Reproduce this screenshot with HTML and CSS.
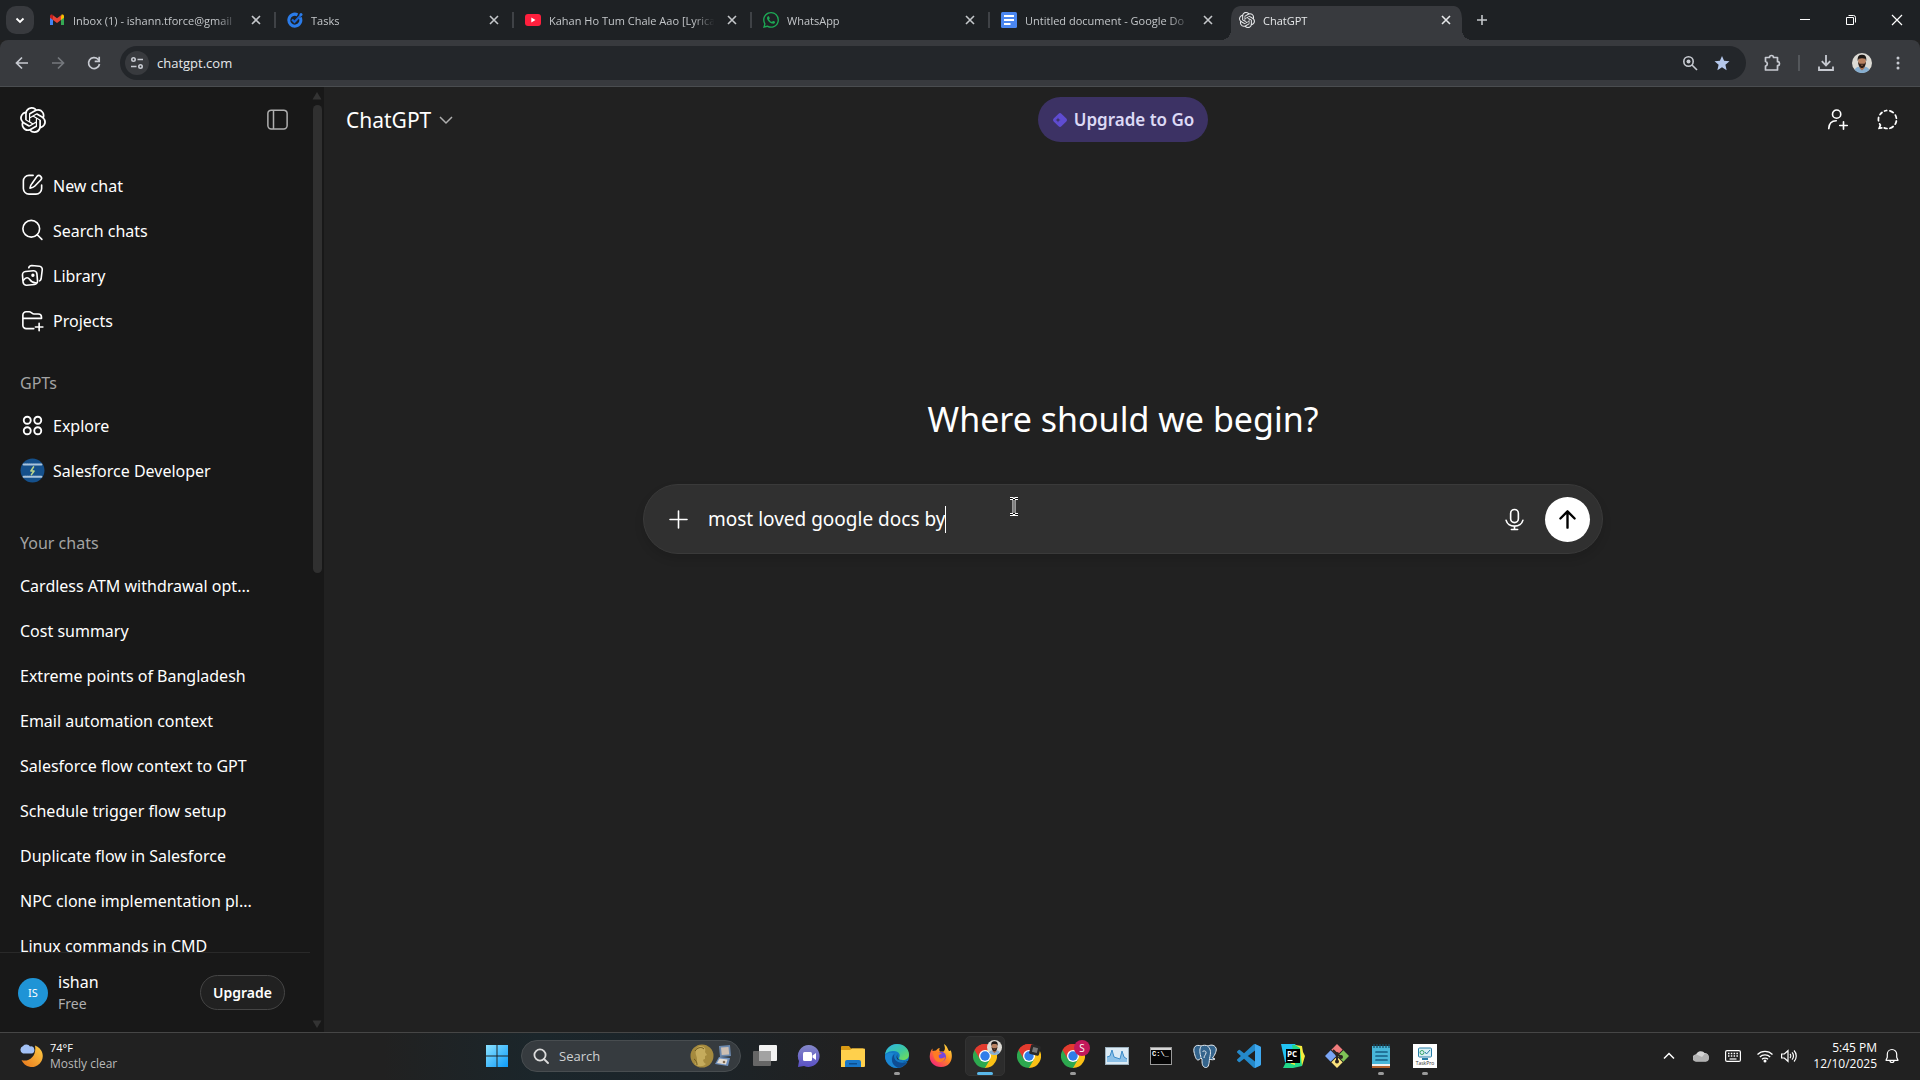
FILE: index.html
```html
<!DOCTYPE html>
<html lang="en">
<head>
  <meta charset="UTF-8">
  <meta name="viewport" content="width=device-width, initial-scale=1">
  <title>ChatGPT</title>
  <link rel="stylesheet" href="styles.css">
</head>
<body>
  <!-- shared icons -->
  <svg class="defs" aria-hidden="true">
    <symbol id="i-openai" viewBox="0 0 24 24"><path fill="currentColor" d="M22.2819 9.8211a5.9847 5.9847 0 0 0-.5157-4.9108 6.0462 6.0462 0 0 0-6.5098-2.9A6.0651 6.0651 0 0 0 4.9807 4.1818a5.9847 5.9847 0 0 0-3.9977 2.9 6.0462 6.0462 0 0 0 .7427 7.0966 5.98 5.98 0 0 0 .511 4.9107 6.051 6.051 0 0 0 6.5146 2.9001A5.9847 5.9847 0 0 0 13.2599 24a6.0557 6.0557 0 0 0 5.7718-4.2058 5.9894 5.9894 0 0 0 3.9977-2.9001 6.0557 6.0557 0 0 0-.7475-7.0729zm-9.022 12.6081a4.4755 4.4755 0 0 1-2.8764-1.0408l.1419-.0804 4.7783-2.7582a.7948.7948 0 0 0 .3927-.6813v-6.7369l2.02 1.1686a.071.071 0 0 1 .038.052v5.5826a4.504 4.504 0 0 1-4.4945 4.4944zm-9.6607-4.1254a4.4708 4.4708 0 0 1-.5346-3.0137l.142.0852 4.783 2.7582a.7712.7712 0 0 0 .7806 0l5.8428-3.3685v2.3324a.0804.0804 0 0 1-.0332.0615L9.74 19.9502a4.4992 4.4992 0 0 1-6.1408-1.6464zM2.3408 7.8956a4.485 4.485 0 0 1 2.3655-1.9728V11.6a.7664.7664 0 0 0 .3879.6765l5.8144 3.3543-2.0201 1.1685a.0757.0757 0 0 1-.071 0l-4.8303-2.7865A4.504 4.504 0 0 1 2.3408 7.872zm16.5963 3.8558L13.1038 8.364 15.1192 7.2a.0757.0757 0 0 1 .071 0l4.8303 2.7913a4.4944 4.4944 0 0 1-.6765 8.1042v-5.6772a.79.79 0 0 0-.407-.667zm2.0107-3.0231l-.142-.0852-4.7735-2.7818a.7759.7759 0 0 0-.7854 0L9.409 9.2297V6.8974a.0662.0662 0 0 1 .0284-.0615l4.8303-2.7866a4.4992 4.4992 0 0 1 6.6802 4.66zM8.3065 12.863l-2.02-1.1638a.0804.0804 0 0 1-.038-.0567V6.0742a4.4992 4.4992 0 0 1 7.3757-3.4537l-.142.0805L8.704 5.459a.7948.7948 0 0 0-.3927.6813zm1.0976-2.3654l2.602-1.4998 2.6069 1.4998v2.9994l-2.5974 1.4997-2.6067-1.4997Z"/></symbol>
    <symbol id="i-close" viewBox="0 0 16 16"><path d="M4 4l8 8M12 4l-8 8" fill="none" stroke="currentColor" stroke-width="1.6"/></symbol>
    <symbol id="i-face" viewBox="0 0 24 24">
      <circle cx="12" cy="12" r="12" fill="#dcdad4"/>
      <path d="M3 20c2-3 5-4 9-4s7 1 9 4a12 12 0 0 1-18 0z" fill="#86aed0"/>
      <path d="M9 14h6v4l-3 3-3-3z" fill="#a9714f"/>
      <ellipse cx="12" cy="10" rx="4.6" ry="6.4" fill="#b98160"/>
      <path d="M7 10C6 3 9 2 12 2s6 1 5 8l-1-3c-2-1-6-1-8 0z" fill="#1d1714"/>
      <path d="M7.400 10.500c0 5 2 7.500 4.600 7.500s4.600-2.500 4.600-7.500l-1.600 2.500h-6zM10 14.200h4l-2 1z" fill="#2b1c16" fill-rule="evenodd"/>
    </symbol>
    <symbol id="i-chrome" viewBox="0 0 24 24">
      <path d="M12 12 1.600 6A12 12 0 0 1 22.400 6z" fill="#e33b2e"/>
      <path d="M12 12V6h10.400A12 12 0 0 1 12 24z" fill="#fbc116"/>
      <path d="M12 12l5.200 3L12 24A12 12 0 0 1 1.600 6z" fill="#2da94f"/>
      <path d="M12 6h10.400A12 12 0 0 0 1.600 6L6.800 15z" fill="#e33b2e"/>
      <circle cx="12" cy="12" r="6" fill="#fff"/>
      <circle cx="12" cy="12" r="4.700" fill="#2f7de9"/>
    </symbol>
  </svg>

  <header class="tabstrip">
    <button class="tab-search" aria-label="Search tabs"><svg width="16" height="16" viewBox="0 0 16 16"><path d="M4.500 6.500L8 10l3.500-3.500" fill="none" stroke="currentColor" stroke-width="1.800"/></svg></button>
    <nav class="tabs" aria-label="Open tabs">
      <div class="tab">
        <svg class="favicon" viewBox="0 0 16 16"><path d="M1 4v9h3V6z" fill="#4285f4"/><path d="M15 4v9h-3V6z" fill="#34a853"/><path d="M12 4.500V8l3-2.300V4c0-1.500-1.700-2-2.600-1.200z" fill="#fbbc04"/><path d="M4 4.500V8L1 5.700V4c0-1.500 1.700-2 2.600-1.200z" fill="#c5221f"/><path d="M4 8V3.200l4 3 4-3V8l-4 3z" fill="#ea4335"/></svg>
        <a href="#">Inbox (1) - ishann.tforce@gmail</a>
        <button aria-label="Close tab"><svg width="16" height="16"><use href="#i-close"/></svg></button>
      </div>
      <div class="tab">
        <svg class="favicon" viewBox="0 0 16 16"><path d="M13.200 5.500A6 6 0 1 1 10.500 2.800" fill="none" stroke="#2b7ce9" stroke-width="3"/><path d="M5 7.500L7.500 10 14 3" fill="none" stroke="#1a66d6" stroke-width="2.200"/><circle cx="14" cy="2.500" r="1.500" fill="#2b7ce9"/></svg>
        <a href="#">Tasks</a>
        <button aria-label="Close tab"><svg width="16" height="16"><use href="#i-close"/></svg></button>
      </div>
      <div class="tab">
        <svg class="favicon" viewBox="0 0 16 16"><rect y="2" width="16" height="12" rx="3" fill="#ff1f3d"/><path d="M6.300 5.500v5l4.200-2.500z" fill="#fff"/></svg>
        <a href="#">Kahan Ho Tum Chale Aao [Lyrica</a>
        <button aria-label="Close tab"><svg width="16" height="16"><use href="#i-close"/></svg></button>
      </div>
      <div class="tab">
        <svg class="favicon" viewBox="0 0 24 24"><path fill="#1da955" d="M17.472 14.382c-.297-.149-1.758-.867-2.03-.967-.273-.099-.471-.148-.67.15-.197.297-.767.966-.94 1.164-.173.199-.347.223-.644.075-.297-.15-1.255-.463-2.39-1.475-.883-.788-1.48-1.761-1.653-2.059-.173-.297-.018-.458.13-.606.134-.133.298-.347.446-.52.149-.174.198-.298.298-.497.099-.198.05-.371-.025-.52-.075-.149-.669-1.612-.916-2.207-.242-.579-.487-.5-.669-.51-.173-.008-.371-.01-.57-.01-.198 0-.52.074-.792.372-.272.297-1.04 1.016-1.04 2.479 0 1.462 1.065 2.875 1.213 3.074.149.198 2.096 3.2 5.077 4.487.709.306 1.262.489 1.694.625.712.227 1.36.195 1.871.118.571-.085 1.758-.719 2.006-1.413.248-.694.248-1.289.173-1.413-.074-.124-.272-.198-.57-.347m-5.421 7.403h-.004a9.87 9.87 0 01-5.031-1.378l-.361-.214-3.741.982.998-3.648-.235-.374a9.86 9.86 0 01-1.51-5.26c.001-5.45 4.436-9.884 9.888-9.884 2.64 0 5.122 1.03 6.988 2.898a9.825 9.825 0 012.893 6.994c-.003 5.45-4.437 9.884-9.885 9.884m8.413-18.297A11.815 11.815 0 0012.05 0C5.495 0 .16 5.335.157 11.892c0 2.096.547 4.142 1.588 5.945L.057 24l6.305-1.654a11.882 11.882 0 005.683 1.448h.005c6.554 0 11.89-5.335 11.893-11.893a11.821 11.821 0 00-3.48-8.413z"/></svg>
        <a href="#">WhatsApp</a>
        <button aria-label="Close tab"><svg width="16" height="16"><use href="#i-close"/></svg></button>
      </div>
      <div class="tab">
        <svg class="favicon" viewBox="0 0 16 16"><rect width="16" height="16" rx="1.500" fill="#4a86f0"/><path d="M3 4h10M3 8h10M3 12h6.500" stroke="#fff" stroke-width="1.800"/></svg>
        <a href="#">Untitled document - Google Do</a>
        <button aria-label="Close tab"><svg width="16" height="16"><use href="#i-close"/></svg></button>
      </div>
      <div class="tab active">
        <svg class="favicon"><use href="#i-openai"/></svg>
        <a href="#">ChatGPT</a>
        <button aria-label="Close tab"><svg width="16" height="16"><use href="#i-close"/></svg></button>
      </div>
    </nav>
    <button class="new-tab" aria-label="New tab"><svg width="16" height="16" viewBox="0 0 16 16"><path d="M8 3v10M3 8h10" stroke="currentColor" stroke-width="1.600"/></svg></button>
    <div class="window-buttons">
      <button aria-label="Minimize"><svg width="12" height="12" viewBox="0 0 12 12"><path d="M1 5.500h10" stroke="currentColor"/></svg></button>
      <button aria-label="Restore"><svg width="12" height="12" viewBox="0 0 12 12"><path d="M1.500 3.500h7v7h-7zM3.500 1.500h5a2 2 0 0 1 2 2v5" fill="none" stroke="currentColor"/></svg></button>
      <button aria-label="Close"><svg width="12" height="12" viewBox="0 0 12 12"><path d="M1 1l10 10M11 1L1 11" stroke="currentColor" stroke-width="1.200"/></svg></button>
    </div>
  </header>

  <div class="toolbar">
    <button aria-label="Back"><svg width="16" height="16" viewBox="0 0 16 16"><path d="M14 8H3M8 2.500L2.500 8 8 13.500" fill="none" stroke="currentColor" stroke-width="1.700"/></svg></button>
    <button class="dim" aria-label="Forward"><svg width="16" height="16" viewBox="0 0 16 16"><path d="M2 8h11M8 2.500L13.500 8 8 13.500" fill="none" stroke="currentColor" stroke-width="1.700"/></svg></button>
    <button aria-label="Reload"><svg width="16" height="16" viewBox="0 0 16 16"><path d="M13.500 9A5.500 5.500 0 1 1 12 4.200l1.500 1.500" fill="none" stroke="currentColor" stroke-width="1.700"/><path d="M13.200 1.800v4.500H8.700" fill="none" stroke="currentColor" stroke-width="1.700"/></svg></button>
    <div class="omnibox">
      <button class="site-info" aria-label="View site information"><svg width="16" height="16" viewBox="0 0 16 16"><g fill="none" stroke="currentColor" stroke-width="1.600"><circle cx="4.500" cy="4.500" r="1.700"/><path d="M8.500 4.500H14M2 11.500h5.500"/><circle cx="11.500" cy="11.500" r="1.700"/></g></svg></button>
      <input type="text" value="chatgpt.com" aria-label="Address and search bar">
      <button aria-label="Zoom"><svg width="16" height="16" viewBox="0 0 16 16"><g fill="none" stroke="currentColor" stroke-width="1.600"><circle cx="6.500" cy="6.500" r="4.700"/><path d="M10 10l5 5"/></g><circle cx="6.500" cy="6.500" r="2" fill="currentColor"/></svg></button>
      <button class="star" aria-label="Edit bookmark"><svg width="18" height="18" viewBox="0 0 24 24"><path fill="currentColor" d="M12 17.770 18.180 21.500l-1.640-7.030L22 9.740l-7.190-.610L12 2.500 9.190 9.130 2 9.740l5.460 4.730L5.820 21.500z"/></svg></button>
    </div>
    <button class="ext" aria-label="Extensions"><svg width="18" height="18" viewBox="0 0 18 18"><path d="M2.500 3.500h4a2 2 0 0 1 4 0h4v4.200a2 2 0 0 1 0 4V16h-12v-4a2.300 2.300 0 0 0 0-4.500z" fill="none" stroke="currentColor" stroke-width="1.700" stroke-linejoin="round"/></svg></button>
    <span class="divider"></span>
    <button aria-label="Downloads"><svg width="18" height="18" viewBox="0 0 18 18"><path d="M9 1v10M4.800 7.200L9 11.400l4.200-4.200M2 12.500V16h14v-3.500" fill="none" stroke="currentColor" stroke-width="1.800"/></svg></button>
    <button aria-label="Profile"><svg width="20" height="20"><use href="#i-face"/></svg></button>
    <button aria-label="Menu"><svg width="16" height="16" viewBox="0 0 16 16" fill="currentColor"><circle cx="8" cy="3" r="1.500"/><circle cx="8" cy="8" r="1.500"/><circle cx="8" cy="13" r="1.500"/></svg></button>
  </div>

  <div class="page">
    <aside class="sidebar">
      <div class="side-body">
        <div class="side-scroll">
          <div class="side-top">
            <a href="#" aria-label="Home"><svg width="26" height="26"><use href="#i-openai"/></svg></a>
            <button aria-label="Close sidebar"><svg width="25" height="25" viewBox="0 0 20 20"><path d="M6.800 2.500v15M5 2.500h10A2.700 2.700 0 0 1 17.700 5.200v9.600A2.700 2.700 0 0 1 15 17.500H5a2.700 2.700 0 0 1-2.700-2.700V5.200A2.700 2.700 0 0 1 5 2.500z" fill="none" stroke="currentColor" stroke-width="1.200"/></svg></button>
          </div>
          <nav class="group">
            <a href="#"><svg class="ico" viewBox="0 0 20 20"><path d="M10.500 1.900H7.200A4.500 4.500 0 0 0 2.700 6.400v6a4.500 4.500 0 0 0 4.500 4.500h5.600a4.500 4.500 0 0 0 4.500-4.500V9.600M13.600 2.700a2 2 0 0 1 3 2.900l-4.900 5c-.8.800-2.200 1.300-3.700 1.500.2-1.500.8-2.900 1.600-3.700z"/></svg>New chat</a>
            <a href="#"><svg class="ico" viewBox="0 0 20 20"><circle cx="9" cy="8.600" r="6.700"/><path d="M13.800 13.400l3.700 3.700"/></svg>Search chats</a>
            <a href="#"><svg class="ico" viewBox="0 0 20 20"><rect x="2.200" y="6.500" width="11.600" height="11" rx="2.700" transform="rotate(-5 8 12)"/><path d="M7 3.800A2.500 2.500 0 0 1 9.400 2l6.200.600a2.500 2.500 0 0 1 2.200 2.800l-.9 7.200a2.500 2.500 0 0 1-1.200 1.700M2.800 13.800c2-2.600 3.600-2.500 5-.600 1.200 1.600 2.900 3 5.200 2.700"/><circle cx="10.300" cy="9.800" r=".7" fill="currentColor"/></svg>Library</a>
            <a href="#"><svg class="ico" viewBox="0 0 20 20"><path d="M2.300 8.300h14.900V7.400A2.600 2.600 0 0 0 14.600 4.800h-3.400C9.600 4.800 9 3 7.300 3H4.900a2.600 2.600 0 0 0-2.600 2.600v8.300a2.600 2.600 0 0 0 2.600 2.600H11M15.300 12.200v6M12.300 15.200h6"/></svg>Projects</a>
          </nav>
          <nav class="group">
            <h2>GPTs</h2>
            <a href="#"><svg class="ico thick" viewBox="0 0 20 20"><circle cx="5.800" cy="5.800" r="2.800"/><circle cx="14.200" cy="5.800" r="2.800"/><circle cx="5.800" cy="14.200" r="2.800"/><circle cx="14.200" cy="14.200" r="2.800"/></svg>Explore</a>
            <a href="#"><svg class="ico plain" viewBox="0 0 24 24"><circle cx="12" cy="12" r="11.500" fill="#15508b"/><path d="M3.500 6.300h17M3.500 18h17" stroke="#a9c3dc" stroke-width="2" stroke-dasharray="1.500 .5"/><path d="M13 8.500l-2.500 4h3L11 16" fill="none" stroke="#bcd58a" stroke-width="1.500"/></svg>Salesforce Developer</a>
          </nav>
          <nav class="group chats">
            <h2>Your chats</h2>
            <a href="#">Cardless ATM withdrawal opt...</a>
            <a href="#">Cost summary</a>
            <a href="#">Extreme points of Bangladesh</a>
            <a href="#">Email automation context</a>
            <a href="#">Salesforce flow context to GPT</a>
            <a href="#">Schedule trigger flow setup</a>
            <a href="#">Duplicate flow in Salesforce</a>
            <a href="#">NPC clone implementation pl...</a>
            <a href="#">Linux commands in CMD</a>
          </nav>
        </div>
        <div class="account">
          <span class="avatar">IS</span>
          <div class="who"><span>ishan</span><small>Free</small></div>
          <button>Upgrade</button>
        </div>
      </div>
      <div class="rail" aria-hidden="true">
        <svg width="10" height="8" viewBox="0 0 10 8"><path d="M5 0l4.500 7.500h-9z" fill="#333"/></svg>
        <div class="track"><div class="thumb"></div></div>
        <svg width="10" height="8" viewBox="0 0 10 8"><path d="M5 8L.5.500h9z" fill="#333"/></svg>
      </div>
    </aside>

    <main>
      <div class="main-top">
        <button class="model">ChatGPT<svg width="18" height="18" viewBox="0 0 18 18"><path d="M3 6l6 6 6-6" fill="none" stroke="#afafaf" stroke-width="1.500"/></svg></button>
        <button class="go"><svg width="16" height="16" viewBox="0 0 16 16"><rect x="2.500" y="2.500" width="11" height="11" rx="2" transform="rotate(45 8 8)" fill="#5f4cd0"/><path d="M6 5.500l.7 1.800 1.800.7-1.800.7L6 10.500l-.7-1.800L3.500 8l1.800-.7z" fill="#3c3264"/></svg>Upgrade to Go</button>
        <div class="main-actions">
          <button aria-label="Start a group chat"><svg width="25" height="25" viewBox="0 0 20 20"><g fill="none" stroke="currentColor" stroke-width="1.300" stroke-linecap="round"><circle cx="9.300" cy="5.700" r="3.300"/><path d="M3 17.300c.2-4.200 2.500-6.300 6-6.300M14.800 11.800v6M11.800 14.800h6"/></g></svg></button>
          <button aria-label="Temporary chat"><svg width="25" height="25" viewBox="0 0 20 20"><g fill="none" stroke="currentColor" stroke-width="1.400" stroke-linecap="round"><path d="M11.900 3.050a7.200 7.200 0 0 1 2.700 1.400M16.300 6.500a7.200 7.200 0 0 1 .8 2.500M17.100 11.200a7.200 7.200 0 0 1-.9 2.500M14.500 15.600a7.200 7.200 0 0 1-2.600 1.400M9.600 17.200a7.200 7.200 0 0 1-2.200-.5M3.700 13.500l.6 1-.9 2.500 2-.3M2.800 11a7.200 7.200 0 0 1 .1-2.600M4 6.100a7.200 7.200 0 0 1 1.600-1.700M7.600 3.200a7.200 7.200 0 0 1 1.700-.4"/></g></svg></button>
        </div>
      </div>
      <div class="start">
        <h1>Where should we begin?</h1>
        <form class="composer">
          <button type="button" aria-label="Add files"><svg width="25" height="25" viewBox="0 0 25 25"><path d="M12.500 4v17M4 12.500h17" stroke="currentColor" stroke-width="1.600" stroke-linecap="round"/></svg></button>
          <div class="prompt"><input type="text" value="most loved google docs by" size="25" aria-label="Ask anything"><span class="caret"></span></div>
          <button type="button" aria-label="Dictate"><svg width="25" height="25" viewBox="0 0 20 20"><g fill="none" stroke="currentColor" stroke-width="1.300" stroke-linecap="round"><rect x="6.900" y="2" width="6.200" height="10.500" rx="3.100"/><path d="M3.300 10.700c.8 2.800 3.500 4.600 6.700 4.600s5.900-1.800 6.700-4.600M10 15.300v2.600M7.500 18h5"/></g></svg></button>
          <button type="button" class="send" aria-label="Send prompt"><svg width="25" height="25" viewBox="0 0 20 20"><path d="M10 16.500v-13M4.300 9.200L10 3.500l5.700 5.700" fill="none" stroke="currentColor" stroke-width="1.900" stroke-linecap="round" stroke-linejoin="round"/></svg></button>
          <svg class="ibeam" width="10" height="19" viewBox="0 0 10 19" aria-hidden="true"><path d="M1 1.500h2.500L5 3l1.500-1.500H9M5 3v13M1 17.500h2.500L5 16l1.500 1.500H9" fill="none" stroke="#fff" stroke-width="3"/><path d="M1 1.500h2.500L5 3l1.500-1.500H9M5 3v13M1 17.500h2.500L5 16l1.500 1.500H9" fill="none" stroke="#000"/></svg>
        </form>
      </div>
    </main>
  </div>

  <footer class="taskbar">
    <div class="weather">
      <svg width="26" height="26" viewBox="0 0 26 26"><defs><linearGradient id="moon" x1="1" y1="0" x2="0" y2="1"><stop offset="0" stop-color="#ffce45"/><stop offset="1" stop-color="#e8761c"/></linearGradient></defs><path d="M17 2.500A11 11 0 1 1 3.500 17C11 19.500 19 13 17 2.500z" fill="url(#moon)"/><path d="M5 10.500a4 4 0 0 1 0-7.500A4.500 4.500 0 0 1 12 3.500a3.500 3.500 0 0 1 1.500 7z" fill="#a3c1f5"/></svg>
      <div><span>74°F</span><small>Mostly clear</small></div>
    </div>
    <div class="apps">
      <button aria-label="Start"><svg width="24" height="24" viewBox="0 0 24 24"><defs><linearGradient id="win" x1="0" y1="0" x2="1" y2="1"><stop offset="0" stop-color="#8be2ff"/><stop offset="1" stop-color="#0c9bfa"/></linearGradient></defs><path d="M1 1h10.500v10.500H1zM12.500 1H23v10.500H12.500zM1 12.500h10.500V23H1zM12.500 12.500H23V23H12.500z" fill="url(#win)"/></svg></button>
      <label class="search">
        <svg width="16" height="16" viewBox="0 0 16 16"><g fill="none" stroke="#dcdcdc" stroke-width="1.800" stroke-linecap="round"><circle cx="7" cy="7" r="5.600"/><path d="M11 11l4 4"/></g></svg>
        <input type="text" placeholder="Search" aria-label="Search">
        <svg width="44" height="24" viewBox="0 0 44 24"><circle cx="12" cy="12" r="11.500" fill="#a58a3e"/><path d="M10 2c5 0 6 3 5 6l2 3-2 1v3c-3 0-2 3 1 5-3 3-8 3-11 0 3-4 2-6 1-9s0-8 4-9z" fill="#c5ab5c"/><path d="M5 7c2-3 6-5 9-2M4 15c2 1 3 3 3 6" stroke="#6f5a20" fill="none"/><path d="M29 2l11-1 1 11-11 1z" fill="#6a87ac"/><path d="M31 3.500l7.500-.5.700 7.500-7.500.500z" fill="#cdbfb2"/><path d="M29 13l11 1-2 8-13-2z" fill="#6f90bd"/><path d="M29.500 14.500l8 1-1.500 5-9-1.500z" fill="#e4dcd2"/><circle cx="34" cy="18" r="1.300" fill="#806a52"/></svg>
      </label>
      <button aria-label="Task view"><svg width="24" height="24" viewBox="0 0 24 24"><rect x="6" y="1" width="18" height="16" rx="1" fill="#f2f2f2"/><rect y="7" width="18" height="15" rx="1" fill="#666"/><rect x="6" y="7" width="12" height="10" fill="#a2a2a2"/></svg></button>
      <button aria-label="Chat"><svg width="24" height="24" viewBox="0 0 24 24"><defs><linearGradient id="chat" x1="0" y1="0" x2="0" y2="1"><stop offset="0" stop-color="#8488c9"/><stop offset="1" stop-color="#5a50c4"/></linearGradient></defs><path d="M12 1a11 11 0 1 1-5 21l-6 1 1-6A11 11 0 0 1 12 1z" fill="url(#chat)"/><rect x="6" y="8" width="9" height="9" rx="1.500" fill="#fff"/><path d="M15.500 11.500L19 9v7l-3.500-2.500z" fill="#fff"/></svg></button>
      <button aria-label="File Explorer"><svg width="24" height="24" viewBox="0 0 24 24"><path d="M0 3a1 1 0 0 1 1-1h7l2 2.500H22V8H0z" fill="#d99a14"/><path d="M0 6h9l2-1.500h12a1 1 0 0 1 1 1V22a1 1 0 0 1-1 1H0z" fill="#ffd04c"/><path d="M4 23v-5a2 2 0 0 1 2-2h12a2 2 0 0 1 2 2v5z" fill="#1877c9"/><path d="M8 19h8v1.500H8z" fill="#0d4f8f"/></svg></button>
      <button class="running" aria-label="Microsoft Edge"><svg width="24" height="24" viewBox="0 0 24 24"><defs><linearGradient id="edge" x1="0" y1="0" x2="1" y2="1"><stop offset="0" stop-color="#2fb6e6"/><stop offset=".55" stop-color="#3dc8a0"/><stop offset="1" stop-color="#7be04b"/></linearGradient></defs><circle cx="12" cy="12" r="12" fill="#1279c6"/><path d="M0 11C1 4 6 0 12 0c7 0 12 5 12 10.500 0 4-3 5.500-6 5.500-2.500 0-4.500-1-4-2 2-3 0-7-5-7-4 0-8 1.500-9 4z" fill="url(#edge)"/><path d="M9 9.500c-4 3-3 11 4 14C6 25 0 18.500 0 12c2-3.500 6-4 9-2.500z" fill="#1b86d2"/><path d="M9.500 10c-2 5 3 11 12.500 8-2 3.500-5 5.500-9 5.700C6 21.500 5.500 13 9.500 10z" fill="#0e4c92"/><path d="M12.500 10c-1.500 5 2 8 10 7l1.500 1.500L20 17c-7 0-10-2-7.500-7z" fill="#20242a"/></svg></button>
      <button aria-label="Firefox"><svg width="24" height="24" viewBox="0 0 24 24"><defs><linearGradient id="fox" x1="1" y1="0" x2=".2" y2="1"><stop offset="0" stop-color="#fff04a"/><stop offset=".5" stop-color="#ff8a1f"/><stop offset="1" stop-color="#f5217b"/></linearGradient></defs><path d="M15 0c4 3 3.500 5 5 7 1.500.5 1.500-1 1.500-1 3 6 1.500 17-9.500 17C5 23 0 18 .8 11.500 1 8 2.500 5.500 3.500 4.500V7L7 6.500C9 4 11 4 11 4c-1 1-1 2.500 0 3.500h3.500C17 5 15.500 2 15 0z" fill="url(#fox)"/><circle cx="12" cy="12.800" r="5" fill="#7545dd"/><path d="M4 8c3-1 7 0 9 2-3 0-4 1.500-3 3.500 1 1.500 4 1 6-.5 0 4-3 5.500-6 5-4-.5-6-5-6-10z" fill="#ff7b24"/></svg></button>
      <button class="running current" aria-label="Google Chrome"><svg width="30" height="28" viewBox="0 0 30 28"><svg y="4" width="24" height="24"><use href="#i-chrome"/></svg><svg x="14" width="15" height="15"><use href="#i-face"/></svg></svg></button>
      <button aria-label="Google Chrome"><svg width="24" height="24" viewBox="0 0 24 24"><use href="#i-chrome"/><rect x="13" y="1" width="10" height="10" rx="1.500" transform="rotate(15 18 6)" fill="#292929"/><rect x="15.500" y="3.500" width="5" height="5" transform="rotate(15 18 6)" fill="#777"/></svg></button>
      <button class="running" aria-label="Google Chrome"><svg width="30" height="28" viewBox="0 0 30 28"><svg y="4" width="24" height="24"><use href="#i-chrome"/></svg><circle cx="21" cy="8" r="8" fill="#c2185b"/><text x="21" y="12" text-anchor="middle" class="badge-text">S</text></svg></button>
      <button aria-label="Performance Monitor"><svg width="24" height="24" viewBox="0 0 24 24"><rect x=".5" y="3.500" width="23" height="17" fill="#dcebf5" stroke="#9bb0bd"/><path d="M2 18v-5l3-1 2-6 2 7 3 1 3 1 2-8 2 6 3 2v3z" fill="#8cc1e8"/><path d="M2 13l3-1 2-6 2 7 3 1 3 1 2-8 2 6 3 2" fill="none" stroke="#3c8cc9"/></svg></button>
      <button aria-label="Command Prompt"><svg width="24" height="24" viewBox="0 0 24 24"><rect x="1.500" y="3.500" width="21" height="17" fill="#050505" stroke="#9a9a9a"/><path d="M2 4h20v2H2z" fill="#d6d6d6"/><text x="3" y="12" class="cmd-text">C:\_</text></svg></button>
      <button aria-label="PostgreSQL"><svg width="24" height="24" viewBox="0 0 24 24"><path d="M8 2C3 0 0 3 1 8c1 4 2 8 4 8s2-2 3-2l1 1c0 4 0 8 3.500 8.500C16 24 16 19 16.500 15c2 1 4 1 5.500 0l-2.500-1C22 11 24 6 23 4c-2-4-6-3-8-2-2-1-5-1-7 0z" fill="#34648c" stroke="#e7edf2"/><path d="M8 2.500c-2 3-1 7 0 11M15 2.500c3 3 3 6 1.500 12M9.500 8c1-2 4-1 3.500 1s-2 3-2 5" fill="none" stroke="#e7edf2"/></svg></button>
      <button aria-label="Visual Studio Code"><svg width="24" height="24" viewBox="0 0 24 24"><path fill="#2489ca" d="M23.150 2.587L18.210.210a1.494 1.494 0 0 0-1.705.290l-9.460 8.630-4.120-3.128a.999.999 0 0 0-1.276.057L.327 7.261A1 1 0 0 0 .326 8.740L3.899 12 .326 15.260a1 1 0 0 0 .001 1.479L1.650 17.940a.999.999 0 0 0 1.276.057l4.120-3.128 9.460 8.630a1.492 1.492 0 0 0 1.704.290l4.942-2.377A1.500 1.500 0 0 0 24 20.060V3.939a1.500 1.500 0 0 0-.850-1.352zm-5.146 14.861L10.826 12l7.178-5.448v10.896z"/><path fill="#3fa9f0" d="M18.004 0v24l5.200-2.600c.5-.3.796-.8.796-1.400V4c0-.6-.3-1.100-.8-1.400z"/></svg></button>
      <button aria-label="PyCharm"><svg width="24" height="24" viewBox="0 0 24 24"><path d="M0 0h14l4 5-4 16-10-3z" fill="#22c3f3"/><path d="M14 1l7 1 1 6 2 4-3 10H9z" fill="#f7ed3d"/><path d="M14 1h-3l3 20-9-3-3 6h10l9-2-2-18z" fill="#21d789"/><rect x="5" y="5" width="14" height="14" fill="#000"/><text x="6" y="12.500" class="pc-text">PC</text><path d="M6.500 16.500h5" stroke="#fff"/></svg></button>
      <button aria-label="Git"><svg width="24" height="24" viewBox="0 0 24 24"><g transform="rotate(45 12 12)"><rect x="3.500" y="3.500" width="8" height="8" fill="#f07c7c"/><rect x="12.500" y="3.500" width="8" height="8" fill="#7fc356"/><rect x="3.500" y="12.500" width="8" height="8" fill="#7aa5f5"/><rect x="12.500" y="12.500" width="8" height="8" fill="#fbe27d"/></g><path d="M8 6l4 4v8M12 10l4 3" fill="none" stroke="#2b2321" stroke-width="2"/><circle cx="12" cy="10" r="2" fill="#2b2321"/><circle cx="12" cy="17.500" r="2" fill="#2b2321"/><circle cx="16" cy="13" r="2" fill="#2b2321"/></svg></button>
      <button class="running" aria-label="Notepad"><svg width="24" height="24" viewBox="0 0 24 24"><path d="M3 2h18v19H3z" fill="#48b6d8"/><path d="M3 20h18v2H3z" fill="#f1f1f1"/><path d="M3 22h18v2H3z" fill="#b4622c"/><path d="M5 0v4M8 0v4M11 0v4M14 0v4M17 0v4M20 0v4" stroke="#174e68" stroke-width="1.200"/><path d="M7 8h11M7 12h11M7 16h11" stroke="#145d83" stroke-width="1.700" stroke-linecap="round"/></svg></button>
      <button class="running" aria-label="TaskPro"><svg width="24" height="24" viewBox="0 0 24 24"><rect width="24" height="24" fill="#fff"/><rect x="5.500" y="4" width="13" height="9" rx="1" fill="#d9f0f5" stroke="#287fa8"/><circle cx="9" cy="8.500" r="2" fill="none" stroke="#35a567"/><path d="M12 8l1.500 2L17 6" stroke="#287fa8" fill="none"/><path d="M9 15h6" stroke="#287fa8" stroke-width="2"/><text x="12" y="20.500" text-anchor="middle" class="task-text">TaskPro</text></svg></button>
    </div>
    <div class="tray">
      <button aria-label="Show hidden icons"><svg width="16" height="16" viewBox="0 0 16 16"><path d="M3 10.500l5-5 5 5" fill="none" stroke="currentColor" stroke-width="1.500"/></svg></button>
      <button aria-label="OneDrive"><svg width="16" height="16" viewBox="0 0 16 16"><path d="M3.500 13.500a3.500 3.500 0 0 1-.5-7 5 5 0 0 1 8.500-1.500A4.400 4.400 0 0 1 13 13.500z" fill="#d5d5d5"/><path d="M3.500 13.500a3.500 3.500 0 0 1 0-7L9 9l3-3.500c2 0 4 2 4 4 0 2.500-1 4-3 4z" fill="#b2b2b2"/></svg></button>
      <button aria-label="Touch keyboard"><svg width="16" height="16" viewBox="0 0 16 16"><rect x=".6" y="2.600" width="14.800" height="10.800" rx="1.500" fill="none" stroke="currentColor" stroke-width="1.200"/><path d="M3 5.500h10M3 8h10" stroke="currentColor" stroke-width="1.500" stroke-dasharray="1.500 1.300"/><path d="M4.500 11h7" stroke="currentColor" stroke-width="1.200"/></svg></button>
      <button class="net" aria-label="Network and volume">
        <svg width="16" height="16" viewBox="0 0 16 16"><g fill="none" stroke="currentColor" stroke-width="1.300"><path d="M.5 6.500a10.500 10.500 0 0 1 15 0M2.800 9a7.300 7.300 0 0 1 10.400 0M5 11.300a4.200 4.200 0 0 1 6 0"/></g><circle cx="8" cy="13" r="1.500" fill="currentColor"/></svg>
        <svg width="16" height="16" viewBox="0 0 16 16"><g fill="none" stroke="currentColor" stroke-width="1.200"><path d="M.6 6h2.700L7 2.700v10.600L3.300 10H.6z"/><path d="M9 6c1 1 1 3 0 4M11 4.300c2 2 2 5.400 0 7.400M13 2.500c3 3 3 8 0 11"/></g></svg>
      </button>
      <div class="clock"><span>5:45 PM</span><span>12/10/2025</span></div>
      <button aria-label="Notifications"><svg width="16" height="16" viewBox="0 0 16 16"><path d="M8 1.500a4.700 4.700 0 0 0-4.700 4.700v3L2 12.300h12l-1.300-3.100v-3A4.700 4.700 0 0 0 8 1.500zM6 12.500a2 2 0 0 0 4 0" fill="none" stroke="currentColor" stroke-width="1.200" stroke-linejoin="round"/></svg></button>
    </div>
  </footer>
</body>
</html>
```
FILE: styles.css
```css
* {
  box-sizing: border-box;
}

body {
  margin: 0;
  height: 100vh;
  display: flex;
  flex-direction: column;
  overflow: hidden;
  background: #212121;
  color: #fff;
  font-family: "Open Sans", "Noto Sans", sans-serif;
  font-size: 16px;
}

button, input {
  font: inherit;
  color: inherit;
  background: none;
  border: none;
  padding: 0;
  outline: none;
}

button {
  display: flex;
  align-items: center;
  justify-content: center;
  flex-shrink: 0;
  cursor: pointer;
}

a {
  color: inherit;
  text-decoration: none;
}

svg {
  display: block;
  flex-shrink: 0;
}

.defs {
  position: absolute;
  width: 0;
  height: 0;
}

/* browser tabs */
.tabstrip {
  display: flex;
  height: 40px;
  flex-shrink: 0;
  padding-left: 6px;
  background: #1e2124;
  color: #c4c7ca;
  font-size: 11px;
}

.tab-search {
  width: 28px;
  height: 28px;
  margin: 6px 4px 0 0;
  border-radius: 10px;
  background: #383a3e;
  color: #fff;
}

.tabs {
  display: flex;
  flex: 0 1 1428px;
  min-width: 0;
  padding-top: 6px;
}

.tab {
  position: relative;
  display: flex;
  align-items: center;
  flex: 1 1 0;
  min-width: 0;
  height: 34px;
  padding: 0 12px 6px 11px;
}

.tab a {
  flex: 1;
  margin: 0 6px 0 8px;
  overflow: hidden;
  white-space: nowrap;
  mask-image: linear-gradient(to right, #000 85%, transparent 98%);
}

.tab::after {
  content: "";
  position: absolute;
  right: 0;
  top: 6px;
  width: 2px;
  height: 16px;
  background: #3f4246;
}

.tab:nth-child(5)::after {
  display: none;
}

.tab.active {
  border: solid transparent;
  border-width: 0 4px 0 3px;
  padding: 0 8px 6px 8px;
  background: #383a3e;
  background-clip: padding-box;
  border-radius: 12px 12px 0 0;
  color: #e6e8ea;
}

/* curved feet of the open tab */
.tab.active::before,
.tab.active::after {
  content: "";
  position: absolute;
  top: auto;
  bottom: 0;
  width: 10px;
  height: 10px;
}

.tab.active::before {
  left: -10px;
  background: radial-gradient(circle at 0 0, transparent 10px, #383a3e 10px);
}

.tab.active::after {
  right: -10px;
  background: radial-gradient(circle at 100% 0, transparent 10px, #383a3e 10px);
}

.favicon {
  width: 16px;
  height: 16px;
}

.new-tab {
  width: 28px;
  height: 28px;
  margin: 6px 0 0 2px;
}

.window-buttons {
  display: flex;
  margin-left: auto;
  color: #fff;
}

.window-buttons button {
  width: 46px;
}

/* address row */
.toolbar {
  display: flex;
  align-items: center;
  height: 47px;
  flex-shrink: 0;
  padding-left: 4px;
  padding-right: 4px;
  background: #383a3e;
  border-bottom: 1px solid #4a4d50;
  border-radius: 8px 8px 0 0;
  color: #c7cad1;
}

.toolbar > button {
  width: 36px;
  height: 34px;
}

.toolbar .dim {
  color: #75787d;
}

.omnibox {
  display: flex;
  align-items: center;
  flex: 1;
  height: 34px;
  margin: 0 8px;
  padding: 0 8px 0 5px;
  border-radius: 17px;
  background: #23262a;
}

.omnibox button {
  width: 32px;
}

.omnibox .site-info {
  width: 24px;
  height: 24px;
  border-radius: 50%;
  background: #383a3e;
}

.omnibox input {
  flex: 1;
  margin-left: 8px;
  font-size: 13px;
  color: #e6e8ea;
}

.omnibox .star {
  color: #b5c8ec;
}

.divider {
  width: 2px;
  height: 16px;
  margin: 0 8px;
  background: #54575b;
}

/* page */
.page {
  display: flex;
  flex: 1;
  min-height: 0;
  font-family: "Noto Sans", "Open Sans", sans-serif;
}

.sidebar {
  display: flex;
  width: 324px;
  flex-shrink: 0;
  background: #181818;
}

.side-body {
  display: flex;
  flex-direction: column;
  flex: 1;
  min-width: 0;
}

.side-scroll {
  flex: 1;
  min-height: 0;
  overflow: hidden;
}

.side-top {
  display: flex;
  align-items: center;
  justify-content: space-between;
  height: 65px;
  padding: 0 20px;
  margin-bottom: 11px;
}

.side-top button {
  color: #afafaf;
}

.group {
  padding: 0 20px;
  margin-bottom: 20px;
}

.group + .group {
  margin-bottom: 30px;
}

.group h2 {
  margin: 0;
  font-size: 16px;
  font-weight: 400;
  line-height: 40px;
  color: #a3a3a3;
}

.group a {
  display: flex;
  align-items: center;
  gap: 8px;
  height: 45px;
  white-space: nowrap;
}

.ico {
  width: 25px;
  height: 25px;
  fill: none;
  stroke: currentColor;
  stroke-width: 1.3;
  stroke-linecap: round;
  stroke-linejoin: round;
}

.ico.thick {
  stroke-width: 1.5;
}

.ico.plain {
  stroke: none;
}

.account {
  display: flex;
  align-items: center;
  height: 80px;
  padding: 0 25px 0 18px;
  border-top: 1px solid #292929;
}

.avatar {
  width: 30px;
  height: 30px;
  margin-right: 10px;
  border-radius: 50%;
  background: #1f94d6;
  font-size: 11px;
  line-height: 30px;
  text-align: center;
}

.who {
  display: flex;
  flex-direction: column;
  line-height: 21px;
}

.who small {
  font-size: 14px;
  color: #afafaf;
}

.account button {
  height: 35px;
  margin-left: auto;
  padding: 0 12px;
  border: 1px solid #454545;
  border-radius: 18px;
  background: #212121;
  font-size: 14px;
  font-weight: 600;
}

.rail {
  display: flex;
  flex-direction: column;
  align-items: center;
  gap: 5px;
  width: 14px;
  padding: 5px 0 4px;
}

.track {
  flex: 1;
}

.thumb {
  width: 9px;
  height: calc(51% + 4px);
  border-radius: 5px;
  background: #303030;
}

main {
  flex: 1;
  min-width: 0;
  display: flex;
  flex-direction: column;
  padding-left: 2px;
}

.main-top {
  display: grid;
  grid-template-columns: 1fr auto 1fr;
  align-items: center;
  height: 65px;
  padding: 0 20px;
}

.model {
  justify-self: start;
  gap: 6px;
  font-size: 21px;
}

.go {
  gap: 6px;
  height: 45px;
  padding: 0 14px;
  border-radius: 23px;
  background: #3c3264;
  color: #dcd9f5;
  font-size: 17px;
  font-weight: 600;
}

.main-actions {
  display: flex;
  justify-content: flex-end;
  gap: 25px;
}

.start {
  width: 100%;
  max-width: 960px;
  margin: 0 auto;
  padding-top: 237px;
}

h1 {
  margin: 0 0 35px;
  font-size: 34px;
  font-weight: 400;
  line-height: 60px;
  text-align: center;
}

.composer {
  position: relative;
  display: flex;
  align-items: center;
  height: 70px;
  padding: 0 12px;
  border: 1px solid #3a3a3a;
  border-radius: 35px;
  background: #303030;
  box-shadow: 0 5px 10px rgba(0, 0, 0, 0.12);
}

.composer button {
  width: 45px;
  height: 45px;
}

.prompt {
  display: flex;
  align-items: center;
  flex: 1;
  margin-left: 7px;
}

.prompt input {
  font-size: 19px;
  field-sizing: content;
}

.caret {
  width: 1px;
  height: 27px;
  background: #fff;
}

.composer .send {
  margin-left: 8px;
  border-radius: 50%;
  background: #fff;
  color: #000;
}

.ibeam {
  position: absolute;
  left: 365px;
  top: 12px;
}

/* taskbar */
.taskbar {
  display: grid;
  grid-template-columns: 1fr auto 1fr;
  height: 48px;
  flex-shrink: 0;
  padding: 0 0 2px 2px;
  border-top: 1px solid #464646;
  background: linear-gradient(to right, #212121 20%, #1b262b 28%, #1c2429 36%, #212121 44%);
  font-size: 12px;
}

.weather {
  display: flex;
  align-items: center;
  gap: 6px;
  padding-left: 16px;
  line-height: 16px;
}

.weather div {
  display: flex;
  flex-direction: column;
  font-size: 11px;
}

.weather small {
  font-size: 12px;
  color: #b9b9b9;
}

.apps {
  display: flex;
  align-items: center;
}

.apps button {
  position: relative;
  width: 40px;
  height: 40px;
  margin: 0 2px;
  border-radius: 5px;
}

.apps .current {
  background: #2c2c2c;
  border: 1px solid #333;
}

/* wide icons carry a badge on the top right of a 24px icon */
.apps svg[width="30"] {
  margin: -4px -6px 0 0;
}

.running::after {
  content: "";
  position: absolute;
  left: 50%;
  bottom: 1px;
  width: 6px;
  height: 3px;
  margin-left: -3px;
  border-radius: 2px;
  background: #9a9a9a;
}

.current::after {
  width: 16px;
  margin-left: -8px;
  bottom: 0;
  background: #5ab8ea;
}

.search {
  display: flex;
  align-items: center;
  width: 220px;
  height: 32px;
  margin: 0 2px;
  padding: 0 6px 0 11px;
  border: 1px solid #484d50;
  border-radius: 16px;
  background: #363b3f;
}

.search input {
  flex: 1;
  min-width: 0;
  margin-left: 10px;
  font-size: 13px;
}

.search input::placeholder {
  color: #cfd1d3;
  opacity: 1;
}

.badge-text {
  font-size: 10px;
  fill: #fff;
}

.cmd-text {
  font: bold 7px "Liberation Mono", monospace;
  fill: #fff;
}

.pc-text {
  font-size: 8px;
  font-weight: 700;
  fill: #fff;
}

.task-text {
  font-size: 5px;
  fill: #333;
}

.tray {
  display: flex;
  align-items: center;
  justify-content: flex-end;
  padding-right: 20px;
}

.tray button {
  width: 32px;
  height: 32px;
}

.tray .net {
  gap: 8px;
  width: 56px;
}

.clock {
  display: flex;
  flex-direction: column;
  align-items: flex-end;
  margin-left: 8px;
  line-height: 16px;
}

.clock + button {
  width: 30px;
  margin-right: -7px;
}
```
